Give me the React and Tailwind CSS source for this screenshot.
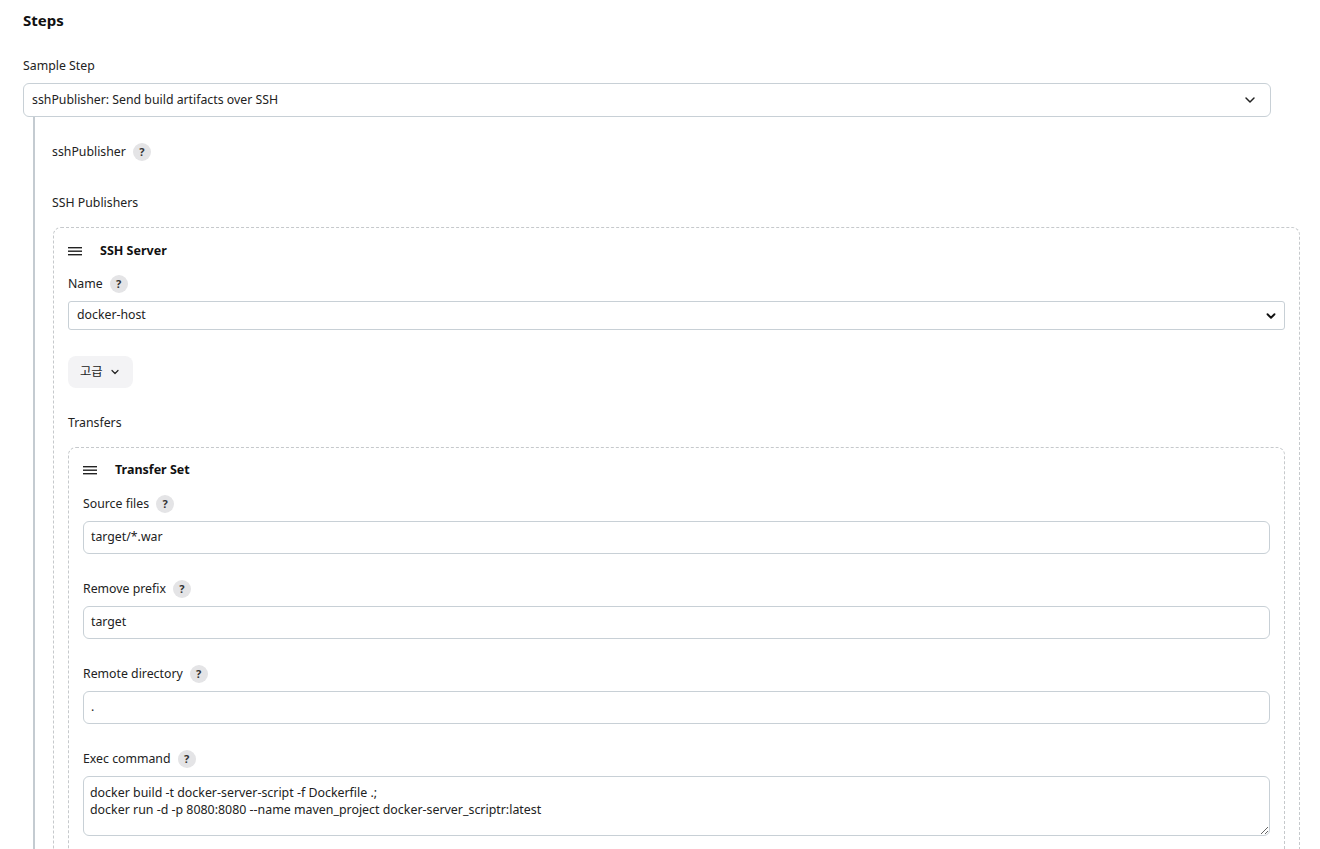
import { ChevronDown } from 'lucide-react'

function Help() {
  return (
    <span className="ml-[7px] inline-flex h-[18px] w-[18px] items-center justify-center rounded-full bg-[#e4e4e6] text-[11px] font-bold text-[#333]">
      ?
    </span>
  )
}

function Label({ text, help, className = '' }) {
  return (
    <div className={`flex h-[20px] items-center text-[12.3px] text-[#222] ${className}`}>
      {text}
      {help && <Help />}
    </div>
  )
}

function Handle() {
  return (
    <svg width="14" height="10" viewBox="0 0 14 10" className="shrink-0">
      <rect x="0" y="1" width="14" height="1.4" fill="#222" />
      <rect x="0" y="4.5" width="14" height="1.4" fill="#222" />
      <rect x="0" y="8" width="14" height="1.4" fill="#222" />
    </svg>
  )
}

function Field({ label, value }) {
  return (
    <div className="mb-[25px]">
      <Label text={label} help className="mb-[7px]" />
      <div className="flex h-[33px] items-center rounded-[6px] border border-[#c8d0d6] px-[7px] text-[12.3px] text-[#222]">
        {value}
      </div>
    </div>
  )
}

export default function App() {
  return (
    <div
      className="h-[849px] overflow-hidden bg-white pl-[23px] pr-[20px] text-[#222]"
      style={{ fontFamily: '"Noto Sans", "Noto Sans CJK KR", sans-serif' }}
    >
      <h2 className="pt-[9px] text-[15px] font-bold leading-[22px] text-[#111]">Steps</h2>

      <Label text="Sample Step" className="mt-[25px]" />
      <div className="mt-[7px] flex h-[34px] w-[1248px] items-center justify-between rounded-[6px] border border-[#c8d0d6] pl-[8px] pr-[12px] text-[12.3px]">
        <span>sshPublisher: Send build artifacts over SSH</span>
        <ChevronDown size={16} strokeWidth={2.2} className="text-[#222]" />
      </div>

      <div className="ml-[10px] border-l-2 border-[#c4cbd1] pl-[18px] pt-[25px]">
        <Label text="sshPublisher" help className="-ml-px" />
        <Label text="SSH Publishers" className="mt-[31px] -ml-px" />

        <div className="mt-[14px] rounded-[8px] border border-dashed border-[#c6c9cc] px-[14px] pt-[13px]">
          <div className="flex h-[20px] items-center gap-[18px]">
            <Handle />
            <span className="text-[12.5px] font-bold text-[#111]">SSH Server</span>
          </div>

          <Label text="Name" help className="mt-[13px]" />
          <div className="mt-[7px] flex h-[29px] items-center justify-between rounded-[3px] border border-[#c8d0d6] pl-[8px] pr-[6px] text-[12.3px]">
            <span>docker-host</span>
            <ChevronDown size={14} strokeWidth={3.2} className="text-[#111]" />
          </div>

          <button className="mt-[26px] flex h-[32px] items-center gap-[6px] rounded-[8px] bg-[#f3f3f5] px-[12px] text-[12.3px] text-[#222]">
            고급
            <ChevronDown size={12} strokeWidth={2.4} />
          </button>

          <Label text="Transfers" className="mt-[25px]" />

          <div className="mt-[14px] rounded-[8px] border border-dashed border-[#c6c9cc] px-[14px] pt-[12px] pb-[40px]">
            <div className="flex h-[20px] items-center gap-[18px]">
              <Handle />
              <span className="text-[12.5px] font-bold text-[#111]">Transfer Set</span>
            </div>

            <div className="mt-[14px]">
              <Field label="Source files" value="target/*.war" />
              <Field label="Remove prefix" value="target" />
              <Field label="Remote directory" value="." />
              <Label text="Exec command" help className="mb-[7px]" />
              <textarea
                readOnly
                className="block h-[60px] w-full resize-y rounded-[6px] border border-[#c8d0d6] px-[6px] py-[7px] text-[12.4px] leading-[17px] text-[#222] outline-none"
                style={{ fontFamily: '"Noto Sans", sans-serif' }}
                defaultValue={'docker build -t docker-server-script -f Dockerfile .;\ndocker run -d -p 8080:8080 --name maven_project docker-server_scriptr:latest'}
              />
            </div>
          </div>
        </div>
      </div>
    </div>
  )
}
